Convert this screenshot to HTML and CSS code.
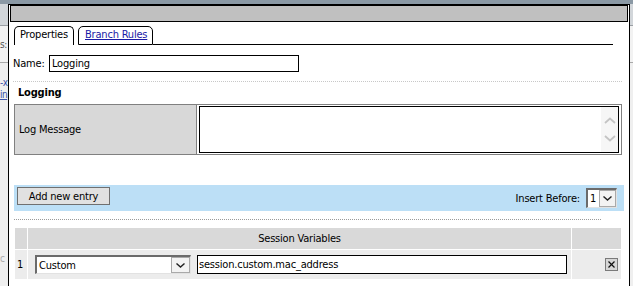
FILE: index.html
```html
<!DOCTYPE HTML>
<html>
<head>
	<meta http-equiv="content-type" content="text/html; charset=utf-8" />
	<title>Logging</title>
	<link rel="stylesheet" href="styles.css">
</head>
<body>
	<!-- page behind the dialog -->
	<div class="page">
		<div class="pageTop"></div>
		<div class="pageHead"></div>
		<div class="pageRow">
			<div class="frag">s:</div>
		</div>
		<div class="pageLinks">
			<div class="frag link">-x</div>
			<div class="frag link under">in</div>
		</div>
		<div class="pageRest">
			<div class="frag faint">c</div>
		</div>
	</div>

	<!-- dialog -->
	<div class="dialog">
		<div class="titlebar"></div>
		<div class="dlgBody">
			<div class="tabs">
				<span class="tab active">Properties</span>
				<span class="tab other"><a href="#">Branch Rules</a></span>
				<span class="tabFill"></span>
			</div>

			<div class="nameRow">
				<label class="nameLabel">Name:</label>
				<input class="nameInput" type="text" value="Logging">
			</div>

			<div class="sepLight"></div>

			<div class="heading">Logging</div>

			<div class="props">
				<div class="propLabel">Log Message</div>
				<div class="propValue">
					<div class="area">
						<div class="areaText"></div>
						<div class="areaScroll">
							<svg width="12" height="7" viewBox="0 0 12 7"><polyline points="1,6 6,1.5 11,6" fill="none" stroke="#c4c4c4" stroke-width="1.8"/></svg>
							<svg width="12" height="7" viewBox="0 0 12 7"><polyline points="1,1 6,5.5 11,1" fill="none" stroke="#c4c4c4" stroke-width="1.8"/></svg>
						</div>
					</div>
				</div>
			</div>

			<div class="entryBar">
				<button class="btn" type="button">Add new entry</button>
				<div class="insert">
					<span class="insertLabel">Insert Before:</span>
					<div class="dd small">
						<span class="ddVal">1</span>
						<span class="ddArr">
							<svg width="9" height="5" viewBox="0 0 9 5"><polyline points="0.5,0.5 4.5,4 8.5,0.5" fill="none" stroke="#222" stroke-width="1.4"/></svg>
						</span>
					</div>
				</div>
			</div>

			<div class="sepDark"></div>

			<div class="vars">
				<div class="vHead"></div>
				<div class="vHead">Session Variables</div>
				<div class="vHead"></div>

				<div class="vCell num">1</div>
				<div class="vCell main">
					<div class="dd wide">
						<span class="ddVal">Custom</span>
						<span class="ddArr">
							<svg width="9" height="5" viewBox="0 0 9 5"><polyline points="0.5,0.5 4.5,4 8.5,0.5" fill="none" stroke="#222" stroke-width="1.4"/></svg>
						</span>
					</div>
					<input class="varInput" type="text" value="session.custom.mac_address">
				</div>
				<div class="vCell del">
					<svg width="13" height="13" viewBox="0 0 13 13">
						<rect x="0.5" y="0.5" width="12" height="12" fill="#d6d6d6" stroke="#7a7a7a"/>
						<line x1="3.5" y1="3.5" x2="9.5" y2="9.5" stroke="#111" stroke-width="1.3"/>
						<line x1="9.5" y1="3.5" x2="3.5" y2="9.5" stroke="#111" stroke-width="1.3"/>
					</svg>
				</div>
			</div>
		</div>
	</div>
</body>
</html>
```

FILE: styles.css
```css
 /* Page */
* {
	margin: 0;
	padding: 0;
	box-sizing: border-box;
}

html, body {
	width: 100%;
	height: 100%;
}

body {
	font-family: "DejaVu Sans Condensed", "Liberation Sans", Arial, sans-serif;
	font-size: 11px;
	letter-spacing: -0.2px;
	color: #000;
	background-color: #efefef;
	overflow: hidden;
	position: relative;
}

 /* Page behind the dialog */

.pageTop {
	height: 4px;
	background-color: #8b99a5;
}

.pageHead {
	height: 22px;
	background-color: #d2d6da;
	border-bottom: 1px solid #9a9fa4;
}

.pageRow {
	height: 37px;
	padding-top: 13px;
	background-color: #f2f2f2;
	border-bottom: 1px solid #a9a9a9;
}

.pageLinks {
	padding-top: 14px;
	height: 190px;
	line-height: 12px;
}

.frag {
	font-size: 10px;
	letter-spacing: -0.5px;
	color: #555;
}

.link {
	color: #3a52a8;
}

.under {
	text-decoration: underline;
}

.faint {
	color: #aaa;
}

 /* Dialog */

.dialog {
	position: absolute;
	left: 8px;
	top: 4px;
	width: 622px;
	height: 300px;
	border: 1px solid #000;
	background-color: #fff;
}

.titlebar {
	height: 17px;
	margin: 0 1px;
	border: 1px solid #000;
	background-color: #c0c0c0;
}

.dlgBody {
	padding: 4px 7px 0 4px;
}

 /* Tabs */

.tabs {
	display: flex;
	align-items: flex-end;
	height: 19px;
	margin: 0 9px 0 1px;
}

.tab {
	height: 19px;
	border: 1px solid #000;
	border-radius: 5px 5px 0 0;
	line-height: 16px;
	white-space: nowrap;
}

.tab.active {
	width: 60px;
	padding-left: 5px;
	border-bottom: none;
}

.tab.other {
	width: 75px;
	margin-left: 4px;
	padding-left: 6px;
}

.tab.other a {
	color: #1a1aa6;
}

.tabFill {
	flex: 1;
	border-bottom: 1px solid #000;
}

 /* Name */

.nameRow {
	display: flex;
	align-items: center;
	margin-top: 10px;
	height: 17px;
}

.nameLabel {
	width: 36px;
}

.nameInput {
	width: 250px;
	height: 17px;
	border: 1px solid #000;
	padding: 0 2px;
	font: inherit;
	letter-spacing: inherit;
	outline: none;
}

.sepLight {
	margin-top: 9px;
	border-top: 1px dotted #c8c8c8;
}

.heading {
	height: 22px;
	line-height: 22px;
	padding-left: 5px;
	font-weight: bold;
}

 /* Log message row */

.props {
	display: flex;
	height: 51px;
	margin-left: 1px;
	border: 1px solid #808080;
}

.propLabel {
	width: 182px;
	display: flex;
	align-items: center;
	padding-left: 4px;
	background-color: #d8d8d8;
	border-right: 1px solid #808080;
}

.propValue {
	flex: 1;
	padding: 1px 2px;
}

.area {
	display: flex;
	height: 47px;
	border: 1px solid #000;
}

.areaText {
	flex: 1;
}

.areaScroll {
	width: 17px;
	display: flex;
	flex-direction: column;
	align-items: center;
	justify-content: center;
	gap: 11px;
	background-color: #f6f6f6;
}

 /* Entry bar */

.entryBar {
	display: flex;
	justify-content: space-between;
	align-items: flex-start;
	height: 26px;
	margin: 30px -2px 0 1px;
	padding: 2px 7px 0 3px;
	background-color: #bcdff6;
}

.btn {
	width: 93px;
	height: 18px;
	border: 1px solid #707070;
	background-color: #e1e1e1;
	font: inherit;
	letter-spacing: inherit;
	color: #000;
}

.insert {
	display: flex;
	align-items: center;
	margin-top: 1px;
}

.insertLabel {
	margin-right: 6px;
}

.dd {
	display: flex;
	background-color: #fff;
	border-style: solid;
	border-width: 2px 1px 1px 2px;
	border-color: #6b6b6b #e2e2e2 #e2e2e2 #6b6b6b;
}

.dd.small {
	width: 31px;
	height: 20px;
}

.dd.wide {
	width: 156px;
	height: 19px;
}

.ddVal {
	flex: 1;
	padding-left: 2px;
	display: flex;
	align-items: center;
}

.ddArr {
	width: 17px;
	display: flex;
	align-items: center;
	justify-content: center;
	border: 1px solid #a9a9a9;
	background-color: #f3f3f3;
}

.dd.wide .ddArr {
	width: 19px;
}

.sepDark {
	margin: 8px 21px 0 1px;
	border-top: 1px dotted #9a9a9a;
}

 /* Session variables */

.vars {
	display: grid;
	grid-template-columns: 12px 1fr 49px;
	grid-template-rows: 21px 29px;
	gap: 1px;
	padding: 1px;
	margin: 7px 0 0 1px;
}

.vHead {
	background-color: #d9d9d9;
	text-align: center;
	line-height: 21px;
}

.vCell {
	display: flex;
	align-items: center;
	background-color: #ececec;
}

.vCell.num {
	padding-left: 2px;
}

.vCell.main {
	padding-left: 7px;
}

.varInput {
	width: 370px;
	height: 19px;
	margin-left: 6px;
	border: 1px solid #000;
	padding: 0 1px;
	font: inherit;
	letter-spacing: inherit;
	outline: none;
}

.vCell.del {
	justify-content: flex-end;
	padding-right: 3px;
}
```
